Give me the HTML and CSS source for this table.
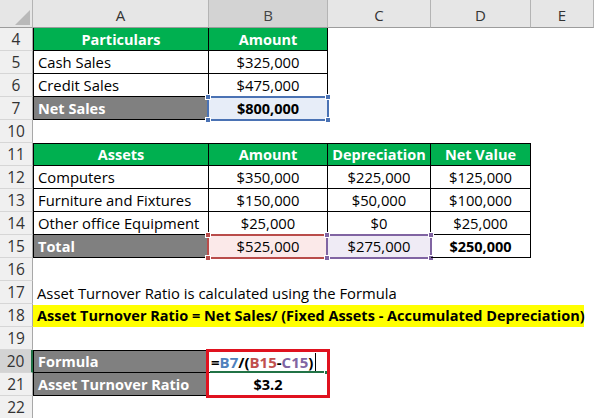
FILE: index.html
```html
<!DOCTYPE html>
<html>
<head>
<meta charset="utf-8">
<link rel="stylesheet" href="styles.css">
</head>
<body>
<div class="sheet">
  <div class="ch corner"></div>
  <div class="ch">A</div>
  <div class="ch act">B</div>
  <div class="ch">C</div>
  <div class="ch">D</div>
  <div class="ch">E</div>

  <div class="rh">4</div>
  <div class="c g bd bl">Particulars</div>
  <div class="c g bd">Amount</div>
  <div class="c"></div><div class="c"></div><div class="c"></div>

  <div class="rh">5</div>
  <div class="c l bd bl">Cash Sales</div>
  <div class="c bd">$325,000</div>
  <div class="c"></div><div class="c"></div><div class="c"></div>

  <div class="rh">6</div>
  <div class="c l bd bl">Credit Sales</div>
  <div class="c bd">$475,000</div>
  <div class="c"></div><div class="c"></div><div class="c"></div>

  <div class="rh">7</div>
  <div class="c l gr bd bl">Net Sales</div>
  <div class="c bd b fill-blue">$800,000<span class="sel sel-blue"><i class="h tl"></i><i class="h tr"></i><i class="h bl2"></i><i class="h br"></i></span></div>
  <div class="c"></div><div class="c"></div><div class="c"></div>

  <div class="rh">10</div>
  <div class="c"></div><div class="c"></div><div class="c"></div><div class="c"></div><div class="c"></div>

  <div class="rh">11</div>
  <div class="c g bd bl bt">Assets</div>
  <div class="c g bd bt">Amount</div>
  <div class="c g bd bt">Depreciation</div>
  <div class="c g bd bt">Net Value</div>
  <div class="c"></div>

  <div class="rh">12</div>
  <div class="c l bd bl">Computers</div>
  <div class="c bd">$350,000</div>
  <div class="c bd">$225,000</div>
  <div class="c bd">$125,000</div>
  <div class="c"></div>

  <div class="rh">13</div>
  <div class="c l bd bl">Furniture and Fixtures</div>
  <div class="c bd">$150,000</div>
  <div class="c bd">$50,000</div>
  <div class="c bd">$100,000</div>
  <div class="c"></div>

  <div class="rh">14</div>
  <div class="c l bd bl">Other office Equipment</div>
  <div class="c bd">$25,000</div>
  <div class="c bd">$0</div>
  <div class="c bd">$25,000</div>
  <div class="c"></div>

  <div class="rh">15</div>
  <div class="c l gr bd bl">Total</div>
  <div class="c bd fill-red">$525,000<span class="sel sel-red"><i class="h tl"></i><i class="h tr"></i><i class="h bl2"></i><i class="h br"></i></span></div>
  <div class="c bd fill-purple">$275,000<span class="sel sel-purple"><i class="h tl"></i><i class="h tr"></i><i class="h bl2"></i><i class="h br"></i></span></div>
  <div class="c bd b">$250,000</div>
  <div class="c"></div>

  <div class="rh">16</div>
  <div class="c"></div><div class="c"></div><div class="c"></div><div class="c"></div><div class="c"></div>

  <div class="rh">17</div>
  <div class="c l span">Asset Turnover Ratio is calculated using the Formula</div>

  <div class="rh">18</div>
  <div class="c l span"><span class="yellow">Asset Turnover Ratio = Net Sales/ (Fixed Assets - Accumulated Depreciation)</span></div>

  <div class="rh">19</div>
  <div class="c"></div><div class="c"></div><div class="c"></div><div class="c"></div><div class="c"></div>

  <div class="rh rh-act">20</div>
  <div class="c l gr bd bl bt">Formula</div>
  <div class="c l bd bt formula">=<span class="r1">B7</span>/(<span class="r2">B15</span>-<span class="r3">C15</span>)<span class="caret"></span><span class="active-line"></span><span class="fill-handle"></span><span class="redbox"></span></div>
  <div class="c"></div><div class="c"></div><div class="c"></div>

  <div class="rh">21</div>
  <div class="c l gr bd bl">Asset Turnover Ratio</div>
  <div class="c bd b">$3.2</div>
  <div class="c"></div><div class="c"></div><div class="c"></div>

  <div class="rh">22</div>
  <div class="c"></div><div class="c"></div><div class="c"></div><div class="c"></div><div class="c"></div>
</div>
</body>
</html>
```

FILE: styles.css
```css
* { box-sizing: border-box; margin: 0; padding: 0; }

body {
  margin: 0;
  background: #fff;
  font-family: "Open Sans", "Liberation Sans", sans-serif;
  font-size: 14.8px;
  color: #000;
  width: 594px;
  height: 418px;
  overflow: hidden;
}

.sheet {
  display: grid;
  grid-template-columns: 33px 176px 119px 103px 100px 63px;
  grid-template-rows: 28px repeat(17, 23px);
}

.ch {
  background: #e6e6e6;
  border-right: 1px solid #b4b4b4;
  border-bottom: 1px solid #9c9c9c;
  display: flex;
  align-items: center;
  justify-content: center;
  color: #333;
  font-size: 15px;
  padding-top: 2px;
}

.ch.act { background: #d3d3d3; color: #444; }

.corner { position: relative; }
.corner::after {
  content: "";
  position: absolute;
  right: 2px;
  bottom: 2px;
  width: 0;
  height: 0;
  border-left: 15px solid transparent;
  border-bottom: 15px solid #b9b9b9;
}

.rh {
  background: #f0f0f0;
  border-right: 1px solid #a8a8a8;
  border-bottom: 1px solid #d6d6d6;
  display: flex;
  align-items: center;
  justify-content: center;
  color: #333;
  font-size: 15.5px;
}

.rh-act {
  background: #d3d3d3;
  border-right: 2px solid #217346;
}

.c {
  display: flex;
  align-items: center;
  justify-content: center;
  white-space: nowrap;
  position: relative;
}

.l { justify-content: flex-start; padding-left: 4px; }
.b { font-weight: bold; font-size: 14.5px; }
.span { grid-column: span 5; overflow: visible; }

.g { background: #00b050; color: #fff; font-weight: bold; font-size: 14.5px; }
.gr { background: #808080; color: #fff; font-weight: bold; font-size: 14.5px; }

.bd { border-right: 1px solid #000; border-bottom: 1px solid #000; }
.bt { border-top: 1px solid #000; }
.bl { border-left: 1px solid #000; }

.fill-blue { background: #e7edf8; }
.fill-red { background: #fbe9e9; }
.fill-purple { background: #efebf5; }

.sel {
  position: absolute;
  top: -1px;
  left: -2px;
  right: -2px;
  bottom: -2px;
  border: 2px solid;
}
.sel-blue { border-color: #4a72b4; color: #4a72b4; }
.sel-red { border-color: #b94c4a; color: #b94c4a; }
.sel-purple { border-color: #8064a2; color: #8064a2; }

.h {
  position: absolute;
  width: 6px;
  height: 6px;
  background: currentColor;
  border: 1px solid #fff;
}
.tl { top: -4px; left: -4px; }
.tr { top: -4px; right: -4px; }
.bl2 { bottom: -4px; left: -4px; }
.br { bottom: -4px; right: -4px; }

.yellow {
  display: block;
  background: #ffff00;
  width: 551px;
  margin-left: -4px;
  padding-left: 4px;
  height: 22px;
  line-height: 22px;
  font-weight: bold;
  font-size: 14.5px;
}

.formula { padding-left: 2px; font-weight: bold; font-size: 15px; }
.r1 { color: #4f81bd; }
.r2 { color: #c0504d; }
.r3 { color: #8064a2; }

.caret {
  display: inline-block;
  width: 1px;
  height: 18px;
  background: #000;
  margin-left: 2px;
}

.active-line {
  position: absolute;
  left: 1px;
  right: 1px;
  bottom: -1px;
  height: 2px;
  background: #217346;
}

.fill-handle {
  position: absolute;
  right: -2px;
  bottom: -3px;
  width: 5px;
  height: 5px;
  background: #217346;
  border: 1px solid #fff;
}

.redbox {
  position: absolute;
  top: -2px;
  left: -3px;
  right: -3px;
  height: 49px;
  border: 3px solid #e0121f;
  z-index: 2;
}
```
